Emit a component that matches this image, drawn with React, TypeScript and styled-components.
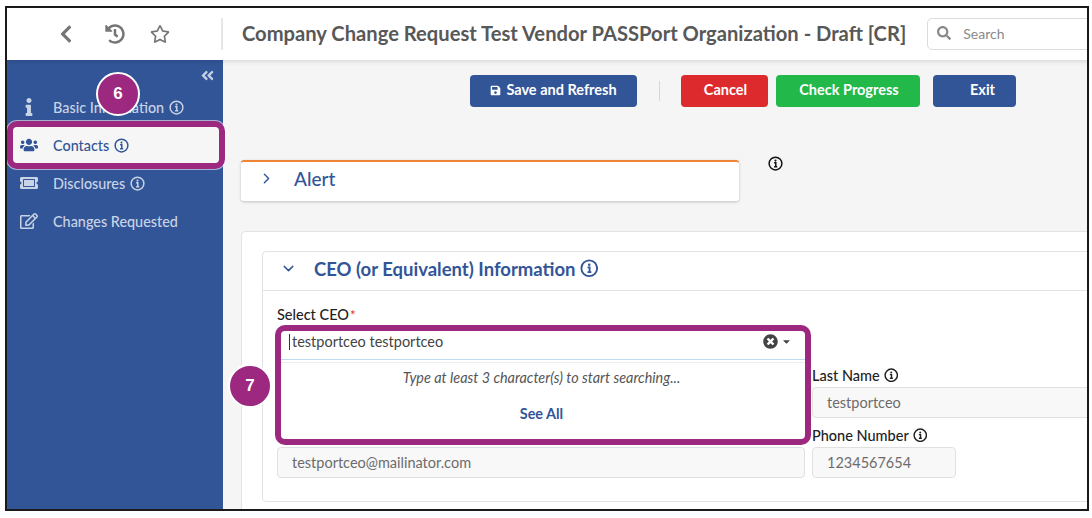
import React from 'react';
import styled, { createGlobalStyle } from 'styled-components';
import {
  FaAngleDoubleLeft,
  FaChevronLeft,
  FaHistory,
  FaInfo,
  FaRegEdit,
  FaRegStar,
  FaSave,
  FaSearch,
  FaTicketAlt,
  FaTimesCircle,
  FaUsers,
  FaCaretDown,
} from 'react-icons/fa';
import { LuChevronDown, LuChevronRight } from 'react-icons/lu';

const GlobalStyle = createGlobalStyle`
  html, body {
    margin: 0;
    background: #fff;
    overflow: hidden;
  }
  *, *::before, *::after {
    box-sizing: border-box;
  }
`;

const PURPLE = '#9c2880';
const BLUE = '#325597';

const Frame = styled.div`
  margin: 6px 0 0 5px;
  width: 1084px;
  height: 505px;
  border: 2px solid #1a1a1a;
  overflow: hidden;
  font-family: Lato, 'Liberation Sans', sans-serif;
  display: grid;
  grid-template-rows: 52px 1fr;
  background: #f5f5f5;
`;

const Header = styled.header`
  display: flex;
  align-items: center;
  background: #fff;
  box-shadow: 0 1px 5px rgba(0, 0, 0, 0.14);
  position: relative;
  z-index: 3;
  white-space: nowrap;
`;

const HeaderTools = styled.div`
  width: 216px;
  height: 32px;
  margin-top: -1px;
  padding-left: 49px;
  display: flex;
  align-items: center;
  gap: 29px;
  color: #757575;
  border-right: 2px solid #e6e6e6;
  flex: none;
  font-size: 20px;

  svg:last-child {
    margin-left: -4px;
  }
`;

const Title = styled.h1`
  margin: -2px 0 0 19px;
  font-size: 20.17px;
  font-weight: 700;
  color: #585858;
  flex: none;
`;

const SearchBox = styled.div`
  margin-left: 21px;
  width: 200px;
  height: 32px;
  border: 1px solid #dcdcdc;
  border-radius: 5px;
  display: flex;
  align-items: center;
  gap: 12px;
  padding: 0 0 2px 9px;
  color: #8a8a8a;
  font-size: 14px;
  flex: none;
`;

const Main = styled.div`
  display: grid;
  grid-template-columns: 216px 1fr;
  min-height: 0;
`;

const Sidebar = styled.nav`
  background: ${BLUE};
  position: relative;
  z-index: 2;
`;

const Collapse = styled.div`
  height: 28px;
  padding: 8px 8px 0 0;
  display: flex;
  justify-content: flex-end;
  color: #c4cfe4;
  font-size: 15px;
`;

const NavItem = styled.div<{ $active?: boolean }>`
  height: 38px;
  display: flex;
  align-items: center;
  gap: 5px;
  position: relative;
  isolation: isolate;
  font-size: 14.4px;
  font-weight: 500;
  color: ${(p) => (p.$active ? BLUE : '#c9d3e6')};

  svg {
    flex: none;
  }

  ${(p) =>
    p.$active &&
    `
    &::before {
      content: '';
      position: absolute;
      z-index: -1;
      left: 0;
      top: -5px;
      width: 218px;
      height: 48px;
      background: #f6f6f6;
      border: 6px solid ${PURPLE};
      border-radius: 10px;
      box-shadow: 0 0 0 1px rgba(255, 255, 255, 0.55);
    }
  `}
`;

const NavIcon = styled.span`
  width: 41px;
  padding-left: 2px;
  flex: none;
  display: flex;
  justify-content: center;
  font-size: 18px;
`;

const NavInfo = styled.span`
  display: flex;
  font-size: 15px;
`;

const Badge = styled.div`
  position: absolute;
  width: 44px;
  height: 44px;
  border-radius: 50%;
  border: 2px solid #fff;
  background: ${PURPLE};
  color: #fff;
  display: flex;
  align-items: center;
  justify-content: center;
  font: 700 17px 'Liberation Sans', sans-serif;
  z-index: 5;
`;

const SixBadge = styled(Badge)`
  left: 89px;
  top: 12px;
`;

const SevenBadge = styled(Badge)`
  left: -53px;
  top: 33px;
`;

const InfoSvg = styled.svg`
  width: 1em;
  height: 1em;
  flex: none;
`;

const InfoIcon: React.FC = () => (
  <InfoSvg viewBox="0 0 16 16" fill="none" stroke="currentColor">
    <circle cx="8" cy="8" r="6.8" strokeWidth="1.6" />
    <circle cx="8" cy="4.9" r="1.1" fill="currentColor" stroke="none" />
    <path d="M6.5 7.3H8.3V11.2M6.5 11.4H9.8" strokeWidth="1.6" />
  </InfoSvg>
);

const Content = styled.main`
  padding: 15px 0 0 18px;
  min-width: 0;
`;

const ActionBar = styled.div`
  display: flex;
  align-items: center;
  height: 32px;
  padding-left: 229px;
`;

const ActionButton = styled.button<{ $bg: string; $w: number; $mr?: number; $pl?: number }>`
  height: 32px;
  width: ${(p) => p.$w}px;
  margin-right: ${(p) => p.$mr ?? 0}px;
  background: ${(p) => p.$bg};
  border: none;
  border-radius: 4px;
  color: #fff;
  font: 700 14.5px Lato, sans-serif;
  display: flex;
  align-items: center;
  justify-content: center;
  gap: 5px;
  padding: 0 0 3px ${(p) => p.$pl ?? 0}px;
  flex: none;

  svg {
    font-size: 11px;
    margin-top: 2px;
  }
`;

const ActionDivider = styled.div`
  width: 1px;
  height: 20px;
  background: #d6d6d6;
  margin: 0 21px 0 22px;
`;

const AlertRow = styled.div`
  margin-top: 53px;
  display: flex;
  align-items: flex-start;
`;

const AlertCard = styled.section`
  width: 498px;
  height: 41px;
  padding-bottom: 7px;
  background: #fff;
  border-top: 2px solid #f08436;
  border-radius: 3px;
  box-shadow: 0 1px 3px rgba(0, 0, 0, 0.22);
  display: flex;
  align-items: center;
  color: ${BLUE};
  font-size: 19px;
  font-weight: 500;
`;

const Chevron = styled.span`
  width: 53px;
  padding-left: 17px;
  display: flex;
  font-size: 17px;
  flex: none;
`;

const AlertInfo = styled.span`
  margin: -4px 0 0 29px;
  font-size: 15px;
  color: #111;
  display: flex;
`;

const OuterCard = styled.section`
  margin-top: 30px;
  width: 900px;
  background: #fff;
  border: 1px solid #e3e3e3;
  border-radius: 4px;
  padding: 19px 20px;
`;

const InnerCard = styled.section`
  border: 1px solid #e3e3e3;
  border-radius: 4px;
`;

const InnerHeader = styled.div`
  height: 39px;
  padding-bottom: 5px;
  display: flex;
  align-items: center;
  gap: 4px;
  border-bottom: 1px solid #e3e3e3;
  color: ${BLUE};
  font-size: 18.5px;
  font-weight: 700;
`;

const SectionChevron = styled.span`
  width: 47px;
  padding-left: 17px;
  display: flex;
  font-size: 17px;
  flex: none;
`;

const Form = styled.div`
  padding: 16px 14px 23px;
  display: grid;
  grid-template-columns: 528px 1fr;
  column-gap: 7px;
  row-gap: 9px;
`;

const Field = styled.div`
  position: relative;
  height: 51px;
`;

const Label = styled.label`
  display: flex;
  align-items: center;
  gap: 4px;
  height: 16px;
  margin-bottom: 4px;
  font-size: 14.5px;
  font-weight: 500;
  color: #222;
`;

const SelectLabel = styled(Label)`
  height: 14px;
  margin-bottom: 6px;
`;

const Required = styled.span`
  color: #e0352f;
  margin-left: -3px;
  align-self: flex-start;
  font-size: 13px;
`;

const ReadInput = styled.div<{ $w?: number }>`
  height: 31px;
  width: ${(p) => (p.$w ? `${p.$w}px` : '100%')};
  background: #f8f8f8;
  border: 1px solid #e0e0e0;
  border-radius: 4px;
  padding: 0 0 1px 14px;
  display: flex;
  align-items: center;
  font-size: 14.5px;
  color: #6c6c6c;
`;

const SelectPanel = styled.div`
  position: absolute;
  z-index: 4;
  left: -2px;
  top: 18px;
  width: 536px;
  height: 120px;
  background: #fff;
  border: 6px solid ${PURPLE};
  border-radius: 10px;
`;

const SelectRow = styled.div`
  height: 29px;
  padding: 0 0 7px 8px;
  display: flex;
  align-items: center;
  border-bottom: 1px solid #b9dcf0;
  font-size: 14.5px;
  color: #444;
`;

const Caret = styled.span`
  width: 1px;
  height: 16px;
  background: #333;
  margin-right: 2px;
`;

const SelectText = styled.span`
  flex: 1;
`;

const SelectIcons = styled.span`
  display: flex;
  align-items: center;
  gap: 3px;
  padding-right: 13px;
  color: #444;
  font-size: 15px;

  svg + svg {
    font-size: 11px;
  }
`;

const Menu = styled.div`
  margin-top: 2px;
  border-top: 1px solid #e8eeee;
  text-align: center;
  font-size: 14.4px;
`;

const MenuHint = styled.div`
  height: 29px;
  padding-right: 3px;
  display: flex;
  align-items: center;
  justify-content: center;
  font-style: italic;
  color: #555;
`;

const SeeAll = styled.div`
  margin-top: 13px;
  padding-right: 3px;
  color: ${BLUE};
  font-weight: 700;
`;

const navItems = [
  { label: 'Basic Information', icon: <FaInfo />, info: true },
  { label: 'Contacts', icon: <FaUsers />, info: true, active: true },
  { label: 'Disclosures', icon: <FaTicketAlt />, info: true },
  { label: 'Changes Requested', icon: <FaRegEdit />, info: false },
];

export default function App() {
  return (
    <>
      <GlobalStyle />
      <Frame>
        <Header>
          <HeaderTools>
            <FaChevronLeft />
            <FaHistory />
            <FaRegStar />
          </HeaderTools>
          <Title>Company Change Request Test Vendor PASSPort Organization - Draft [CR]</Title>
          <SearchBox>
            <FaSearch />
            Search
          </SearchBox>
        </Header>
        <Main>
          <Sidebar>
            <Collapse>
              <FaAngleDoubleLeft />
            </Collapse>
            {navItems.map((item) => (
              <NavItem key={item.label} $active={item.active}>
                <NavIcon>{item.icon}</NavIcon>
                {item.label}
                {item.info && (
                  <NavInfo>
                    <InfoIcon />
                  </NavInfo>
                )}
              </NavItem>
            ))}
            <SixBadge>6</SixBadge>
          </Sidebar>
          <Content>
            <ActionBar>
              <ActionButton $bg={BLUE} $w={167}>
                <FaSave />
                Save and Refresh
              </ActionButton>
              <ActionDivider />
              <ActionButton $bg="#dd2a2c" $w={87} $mr={8} $pl={2}>
                Cancel
              </ActionButton>
              <ActionButton $bg="#22b84a" $w={144} $mr={13} $pl={2}>
                Check Progress
              </ActionButton>
              <ActionButton $bg={BLUE} $w={83} $pl={16}>
                Exit
              </ActionButton>
            </ActionBar>
            <AlertRow>
              <AlertCard>
                <Chevron>
                  <LuChevronRight />
                </Chevron>
                Alert
              </AlertCard>
              <AlertInfo>
                <InfoIcon />
              </AlertInfo>
            </AlertRow>
            <OuterCard>
              <InnerCard>
                <InnerHeader>
                  <SectionChevron>
                    <LuChevronDown />
                  </SectionChevron>
                  CEO (or Equivalent) Information
                  <InfoIcon />
                </InnerHeader>
                <Form>
                  <Field>
                    <SelectLabel>
                      Select CEO<Required>*</Required>
                    </SelectLabel>
                    <SelectPanel>
                      <SelectRow>
                        <Caret />
                        <SelectText>testportceo testportceo</SelectText>
                        <SelectIcons>
                          <FaTimesCircle />
                          <FaCaretDown />
                        </SelectIcons>
                      </SelectRow>
                      <Menu>
                        <MenuHint>Type at least 3 character(s) to start searching...</MenuHint>
                        <SeeAll>See All</SeeAll>
                      </Menu>
                      <SevenBadge>7</SevenBadge>
                    </SelectPanel>
                  </Field>
                  <Field />
                  <Field>
                    <Label>First Name</Label>
                    <ReadInput>testportceo</ReadInput>
                  </Field>
                  <Field>
                    <Label>
                      Last Name <InfoIcon />
                    </Label>
                    <ReadInput>testportceo</ReadInput>
                  </Field>
                  <Field>
                    <Label>Email</Label>
                    <ReadInput>testportceo@mailinator.com</ReadInput>
                  </Field>
                  <Field>
                    <Label>
                      Phone Number <InfoIcon />
                    </Label>
                    <ReadInput $w={144}>1234567654</ReadInput>
                  </Field>
                </Form>
              </InnerCard>
            </OuterCard>
          </Content>
        </Main>
      </Frame>
    </>
  );
}
